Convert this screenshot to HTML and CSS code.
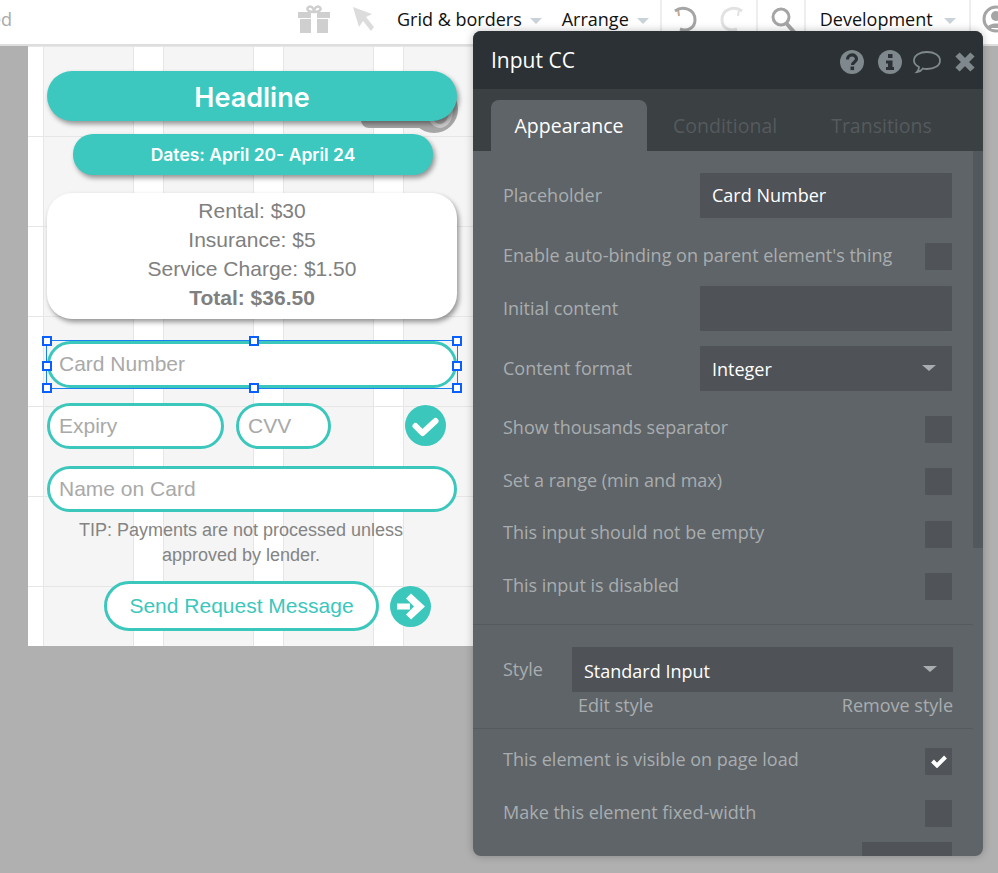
FILE: index.html
```html
<!DOCTYPE html>
<html lang="en">
<head>
<meta charset="utf-8">
<title>Input CC</title>
<link rel="stylesheet" href="styles.css">
</head>
<body>
<header class="topbar">
  <span class="saved">ed</span>
  <svg class="ic gift" width="32" height="30" viewBox="0 0 32 30"><path d="M10 3.500c2-2.500 6 0 6 4 0-4 4-6.500 6-4 2 2.500-1.500 4.500-6 4.500s-8-2-6-4.500z" fill="none" stroke="#cfcfcf" stroke-width="2.500"/><path d="M0 8h13v6H0zM19 8h13v6H19zM2 15h11v14H2zM19 15h11v14H19z" fill="#cfcfcf"/></svg>
  <svg class="ic cursor" width="23" height="26" viewBox="0 0 23 26"><path d="M1 1l19 7-6 3 8 10-3 4-8-10-4 6z" fill="#dcdcdc"/></svg>
  <span class="tool grid">Grid &amp; borders</span><i class="caret"></i>
  <span class="tool arrange">Arrange</span><i class="caret"></i>
  <i class="sep sep1"></i>
  <svg class="ic undo" width="26" height="28" viewBox="0 0 26 28"><path d="M6 4l1 7" fill="none" stroke="#c9a98f" stroke-width="2"/><path d="M3 6c7-5 20-3 20 9 0 8-8 12-15 9" fill="none" stroke="#a5a5a5" stroke-width="3"/></svg>
  <svg class="ic redo" width="26" height="28" viewBox="0 0 26 28"><path d="M23 6C16 1 3 3 3 15c0 8 8 12 15 9" fill="none" stroke="#e2e2e2" stroke-width="3"/><path d="M20 4l-1 7" fill="none" stroke="#e2e2e2" stroke-width="2"/></svg>
  <i class="sep sep2"></i>
  <svg class="ic search" width="26" height="28" viewBox="0 0 26 28"><circle cx="10" cy="11" r="8" fill="none" stroke="#a5a5a5" stroke-width="3"/><path d="M15 17l9 10" stroke="#a5a5a5" stroke-width="4"/></svg>
  <i class="sep sep3"></i>
  <span class="tool dev">Development</span><i class="caret dev-caret"></i>
  <i class="sep sep4"></i>
  <svg class="ic avatar" width="17" height="28" viewBox="0 0 17 28"><circle cx="14" cy="14" r="12" fill="#fff" stroke="#a5a5a5" stroke-width="3"/><circle cx="14" cy="11" r="5" fill="#a5a5a5"/><path d="M5 23c1-6 17-6 18 0z" fill="#a5a5a5"/></svg>
</header>

<main class="stage">
  <section class="canvas">
    <div class="ghost"><span class="ghost-blob"><span class="ghost-ring"></span></span></div>
    <div class="headline">Headline</div>
    <div class="dates">Dates: April 20- April 24</div>
    <div class="summary">
      <div>Rental: $30</div>
      <div>Insurance: $5</div>
      <div>Service Charge: $1.50</div>
      <div class="total">Total: $36.50</div>
    </div>
    <div class="field field-card"><span class="nudge">Card Number</span>
      <div class="selection">
        <b class="h tl"></b><b class="h tc"></b><b class="h tr"></b>
        <b class="h ml"></b><b class="h mr"></b>
        <b class="h bl"></b><b class="h bc"></b><b class="h br"></b>
      </div>
    </div>
    <div class="pay-row">
      <div class="field expiry">Expiry</div>
      <div class="field cvv">CVV</div>
      <svg class="round check" width="41" height="41" viewBox="0 0 41 41"><circle cx="20.500" cy="20.500" r="20.500" fill="#3cc7bd"/><path d="M10.500 21l7 7 13-12" fill="none" stroke="#fff" stroke-width="6" stroke-linejoin="round" stroke-linecap="round"/></svg>
    </div>
    <div class="field name">Name on Card</div>
    <p class="tip">TIP: Payments are not processed unless<br>approved by lender.</p>
    <div class="send-row">
      <div class="send">Send Request Message</div>
      <svg class="round arrow" width="41" height="41" viewBox="0 0 41 41"><circle cx="20.500" cy="20.500" r="20.500" fill="#3cc7bd"/><path d="M7 17.500h13v6H7zM21 7.500l14 13-14 13-5-5 8-8-8-8z" fill="#fff"/></svg>
    </div>
  </section>
</main>

<aside class="panel">
  <div class="panel-head">
    <h2>Input CC</h2>
    <div class="head-icons">
      <svg width="24" height="24" viewBox="0 0 24 24"><circle cx="12" cy="12" r="12" fill="#7f888c"/><path d="M7.500 9.500c0-6 9-6 9-.500 0 3-4 3-4 6" fill="none" stroke="#2b3134" stroke-width="3.200"/><rect x="10.500" y="16.500" width="3.600" height="3.600" fill="#2b3134"/></svg>
      <svg class="i-info" width="24" height="24" viewBox="0 0 24 24"><circle cx="12" cy="12" r="12" fill="#7f888c"/><rect x="10" y="4" width="4.500" height="4" fill="#2b3134"/><path d="M8 10.500h6.500V17H16v3H8v-3h2v-3.500H8z" fill="#2b3134"/></svg>
      <svg class="i-chat" width="28" height="24" viewBox="0 0 28 24"><path d="M14 2c7 0 13 3 13 8.500S21 19 14 19c-1.500 0-3 0-4-.500-1 1.500-3 3-6 3.500 1.500-1.500 2-3 2-5C3 15.500 1 13 1 10.500 1 5 7 2 14 2z" fill="none" stroke="#7f888c" stroke-width="1.800"/></svg>
      <svg class="i-close" width="20" height="20" viewBox="0 0 20 20"><path d="M2.500 2.500l15 15M17.500 2.500l-15 15" stroke="#7f888c" stroke-width="6"/></svg>
    </div>
  </div>
  <nav class="tabs">
    <span class="tab active">Appearance</span>
    <span class="tab conditional">Conditional</span>
    <span class="tab transitions">Transitions</span>
  </nav>
  <div class="panel-body">
    <div class="scrollbar"></div>
    <div class="row row-input"><label class="lift">Placeholder</label><div class="box"><span class="lift">Card Number</span></div></div>
    <div class="row row-check"><label>Enable auto-binding on parent element's thing</label><i class="cb"></i></div>
    <div class="row row-input"><label>Initial content</label><div class="box"></div></div>
    <div class="row row-input"><label>Content format</label><div class="box"><span class="drop">Integer</span><i class="caret caret-dark"></i></div></div>
    <div class="row row-check"><label>Show thousands separator</label><i class="cb"></i></div>
    <div class="row row-check"><label>Set a range (min and max)</label><i class="cb"></i></div>
    <div class="row row-check"><label>This input should not be empty</label><i class="cb"></i></div>
    <div class="row row-check"><label>This input is disabled</label><i class="cb"></i></div>
    <hr class="rule rule-a">
    <div class="row row-style"><label>Style</label><div class="box box-style"><span class="drop-more">Standard Input</span><i class="caret caret-dark"></i></div></div>
    <div class="style-links"><span>Edit style</span><span>Remove style</span></div>
    <hr class="rule rule-b">
    <div class="row row-check row-first"><label>This element is visible on page load</label><i class="cb"><svg width="18" height="14" viewBox="0 0 18 14"><path d="M2.500 7l4.500 4.500 8.500-8.500" fill="none" stroke="#fff" stroke-width="4"/></svg></i></div>
    <div class="row row-check"><label>Make this element fixed-width</label><i class="cb"></i></div>
    <div class="stub"></div>
  </div>
</aside>
</body>
</html>
```

FILE: styles.css
```css
* { box-sizing: border-box; }
html, body { margin: 0; padding: 0; }
body {
  width: 998px;
  height: 873px;
  overflow: hidden;
  background: #b0b0b0;
  font-family: "Liberation Sans", Arial, sans-serif;
  position: relative;
}

/* top bar */
.topbar {
  height: 46px;
  padding-bottom: 6px;
  background: #fff;
  border-bottom: 2px solid #dedede;
  display: flex;
  align-items: center;
  font-family: "Open Sans", sans-serif;
  font-size: 18px;
  color: #111;
  white-space: nowrap;
  overflow: hidden;
}
.saved { width: 12px; margin-left: -9px; flex: 0 0 21px; color: #aaa; }
.ic { flex: none; display: block; }
.gift { margin-left: 286px; }
.cursor { margin-left: 22px; }
.tool { flex: none; }
.grid { margin-left: 22px; }
.arrange { margin-left: 20px; }
.caret {
  flex: none;
  width: 0;
  height: 0;
  margin-left: 8px;
  margin-top: 3px;
  border-left: 6px solid transparent;
  border-right: 6px solid transparent;
  border-top: 6px solid #c8d2d8;
}
.sep { flex: none; width: 2px; height: 44px; margin-top: 6px; background: #eee; }
.sep1 { margin-left: 11px; }
.undo { margin-left: 10px; }
.redo { margin-left: 21px; }
.sep2 { margin-left: 11px; }
.search { margin-left: 13px; margin-top: 2px; }
.sep3 { margin-left: 7px; }
.dev { margin-left: 14px; }
.dev-caret { margin-left: 11px; }
.sep4 { margin-left: 13px; }
.avatar { margin-left: 11px; }

/* canvas */
.stage { padding-left: 28px; }
.canvas {
  position: relative;
  width: 445px;
  height: 600px;
  padding: 25px 0 0 19px;
  background-color: #fff;
  background-image:
    repeating-linear-gradient(to bottom, #e6e6e6 0 1px, transparent 1px 90px),
    repeating-linear-gradient(to right, #fff 0 15px, #e6e6e6 15px 16px, #f5f5f5 16px 105px, #e6e6e6 105px 106px, #fff 106px 120px);
}
.ghost {
  position: absolute;
  left: 333px;
  top: 54px;
  width: 80px;
  height: 28px;
  border-radius: 0 0 0 8px;
  background: #a6a6a6;
}
.ghost-blob {
  position: absolute;
  left: 49px;
  top: -15px;
  width: 48px;
  height: 48px;
  border-radius: 50%;
  background: #a6a6a6;
}
.ghost-ring {
  position: absolute;
  left: 17px;
  top: 8px;
  width: 26px;
  height: 35px;
  border-radius: 50%;
  border: 4px solid #cbcbcb;
  background: #a6a6a6;
}
.headline, .dates {
  position: relative;
  display: flex;
  align-items: center;
  justify-content: center;
  background: #3cc8bf;
  color: #fff;
  font-family: "Inter", sans-serif;
  font-weight: 600;
  box-shadow: 2px 3px 5px rgba(0,0,0,.4);
}
.headline {
  width: 410px;
  height: 50px;
  padding-top: 2px;
  border-radius: 25px;
  font-size: 27px;
}
.dates {
  width: 360px;
  height: 41px;
  margin: 13px 0 0 26px;
  border-radius: 20px;
  font-size: 17.500px;
}
.summary {
  width: 410px;
  height: 126px;
  margin-top: 18px;
  padding-top: 3px;
  border-radius: 25px;
  background: #fff;
  box-shadow: 2px 3px 5px rgba(0,0,0,.4);
  color: #808080;
  font-size: 21px;
  line-height: 29px;
  text-align: center;
}
.total { font-weight: 700; }
.field {
  position: relative;
  height: 46px;
  padding-left: 9px;
  display: flex;
  align-items: center;
  background: #fff;
  border: 3px solid #3cc7bd;
  border-radius: 23px;
  color: #a9a9a9;
  font-size: 21px;
}
.field-card { width: 410px; height: 47px; margin-top: 22px; border-radius: 24px; }
.nudge { margin-bottom: 2px; }
.pay-row { display: flex; align-items: flex-start; margin-top: 15px; }
.expiry { width: 177px; }
.cvv { width: 95px; margin-left: 12px; }
.round { flex: none; display: block; }
.check { margin: 2px 0 0 74px; }
.name { width: 410px; margin-top: 17px; }
.selection {
  position: absolute;
  left: -4px;
  top: -4px;
  width: 412px;
  height: 49px;
  border: 1px solid #1a7ff0;
}
.h {
  position: absolute;
  width: 10px;
  height: 10px;
  background: #fff;
  border: 2px solid #0a5fff;
}
.tl { left: -5px; top: -5px; }
.tc { left: 202px; top: -5px; }
.tr { right: -5px; top: -5px; }
.ml { left: -5px; top: 20px; }
.mr { right: -5px; top: 20px; }
.bl { left: -5px; bottom: -5px; }
.bc { left: 202px; bottom: -5px; }
.br { right: -5px; bottom: -5px; }
.tip {
  width: 388px;
  margin: 6px 0 0;
  color: #848484;
  font-size: 18px;
  line-height: 25px;
  text-align: center;
}
.send-row { display: flex; align-items: center; margin: 13px 0 0 57px; }
.send {
  width: 275px;
  height: 50px;
  display: flex;
  align-items: center;
  justify-content: center;
  border: 3px solid #3cc7bd;
  border-radius: 25px;
  background: #fff;
  color: #3cc7bd;
  font-size: 21px;
}
.arrow { margin-left: 11px; }

/* floating panel */
.panel {
  position: absolute;
  left: 473px;
  top: 31px;
  width: 510px;
  height: 825px;
  border-radius: 8px;
  overflow: hidden;
  background: #5f6468;
  box-shadow: 0 0 8px rgba(0,0,0,.25);
  font-family: "Open Sans", sans-serif;
  font-size: 18px;
  color: #a9adaf;
  display: flex;
  flex-direction: column;
}
.panel-head {
  flex: none;
  height: 58px;
  padding: 0 8px 0 18px;
  display: flex;
  align-items: center;
  justify-content: space-between;
  background: #2b3134;
}
.panel-head h2 { margin: 0; font-size: 21px; font-weight: 400; color: #fff; }
.head-icons { display: flex; align-items: center; margin-top: 3px; }
.head-icons svg { display: block; }
.i-info { margin-left: 14px; }
.i-chat { margin-left: 11px; }
.i-close { margin-left: 14px; }
.tabs {
  flex: none;
  height: 62px;
  padding: 11px 0 0 18px;
  display: flex;
  background: #3b4043;
}
.tab { color: #555a5d; font-size: 19.500px; padding-top: 12px; }
.tab.active {
  width: 156px;
  text-align: center;
  color: #fff;
  background: #5f6468;
  border-radius: 8px 8px 0 0;
}
.conditional { margin-left: 26px; }
.transitions { margin-left: 54px; }
.panel-body { position: relative; flex: 1; padding: 7px 31px 0 30px; overflow: hidden; }
.scrollbar {
  position: absolute;
  right: 0;
  top: 0;
  width: 10px;
  height: 397px;
  background: #53585c;
}
.row { display: flex; align-items: center; justify-content: space-between; }
.row-input { height: 45px; margin-top: 15px; }
.row-check { height: 27.500px; margin-top: 25px; }
.row-check label { margin-bottom: 4px; }
.row-first { margin-top: 19px; }
.lift { margin-bottom: 2px; }
.drop { margin-top: 2px; }
.drop-more { margin-top: 4px; }
.box {
  width: 252px;
  height: 45px;
  padding: 0 12px;
  display: flex;
  align-items: center;
  justify-content: space-between;
  background: #4f5357;
  border-radius: 1px;
  color: #fff;
}
.caret-dark { border-top-color: #a9adaf; margin: 0 4px 0 0; border-left-width: 7px; border-right-width: 7px; }
.cb {
  flex: none;
  width: 27px;
  height: 27px;
  display: flex;
  align-items: center;
  justify-content: center;
  background: #505458;
  border-radius: 1px;
}
.cb svg { display: block; }
.rule { border: 0; height: 1px; background: #565a5e; margin: 0 -21px 0 -30px; }
.rule-a { margin-top: 23px; }
.rule-b { margin-top: 11px; }
.row-style { height: 45px; margin-top: 22px; margin-right: -1px; }
.box-style { width: 381px; }
.style-links { display: flex; justify-content: space-between; margin: 1px -1px 0 75px; line-height: 24px; }
.stub {
  position: absolute;
  right: 31px;
  top: 691px;
  width: 90px;
  height: 20px;
  background: #505458;
}
```
